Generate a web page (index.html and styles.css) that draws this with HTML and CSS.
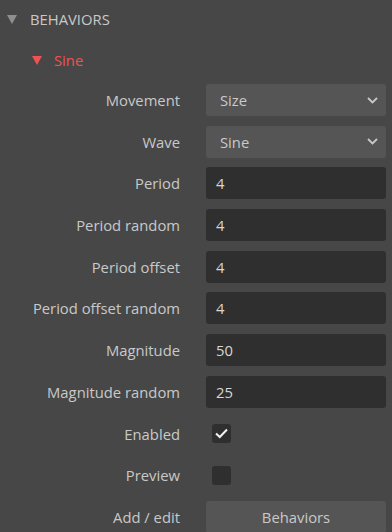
FILE: index.html
```html
<!DOCTYPE html>
<html lang="en">
<head>
  <meta charset="UTF-8">
  <title>Behaviors</title>
  <meta name="viewport" content="width=device-width, initial-scale=1.0">
  <link rel="stylesheet" href="styles.css">
</head>
<body>
  <div class="panel">
    <div class="section-head">
      <span class="tri tri-gray"></span>
      <span>BEHAVIORS</span>
    </div>

    <div class="behavior-head">
      <span class="tri tri-red"></span>
      <span>Sine</span>
    </div>

    <div class="rows">
      <div class="row">
        <label>Movement</label>
        <div class="select"><span>Size</span>
          <svg width="11" height="7" viewBox="0 0 11 7"><path d="M1 1 L5.5 5.5 L10 1" fill="none" stroke="#c8c8c8" stroke-width="1.8"/></svg>
        </div>
      </div>
      <div class="row">
        <label>Wave</label>
        <div class="select"><span>Sine</span>
          <svg width="11" height="7" viewBox="0 0 11 7"><path d="M1 1 L5.5 5.5 L10 1" fill="none" stroke="#c8c8c8" stroke-width="1.8"/></svg>
        </div>
      </div>
      <div class="row"><label>Period</label><div class="field">4</div></div>
      <div class="row"><label>Period random</label><div class="field">4</div></div>
      <div class="row"><label>Period offset</label><div class="field">4</div></div>
      <div class="row"><label>Period offset random</label><div class="field">4</div></div>
      <div class="row"><label>Magnitude</label><div class="field">50</div></div>
      <div class="row"><label>Magnitude random</label><div class="field">25</div></div>
      <div class="row">
        <label>Enabled</label>
        <div class="check">
          <svg width="19" height="19" viewBox="0 0 19 19"><path d="M4 9.5 L7.8 13 L15 5.5" fill="none" stroke="#f2f2f2" stroke-width="2"/></svg>
        </div>
      </div>
      <div class="row"><label>Preview</label><div class="check"></div></div>
      <div class="row"><label>Add / edit</label><div class="button">Behaviors</div></div>
    </div>
  </div>
</body>
</html>
```

FILE: styles.css
```css
body {
  margin: 0;
  background: #474747;
  font-family: "Open Sans", "Noto Sans", sans-serif;
  font-size: 14.8px;
  color: #c9c9c9;
}

.panel {
  width: 392px;
  height: 532px;
  overflow: hidden;
}

.section-head {
  display: flex;
  align-items: center;
  height: 20px;
  padding: 9px 0 0 7px;
}

.behavior-head {
  display: flex;
  align-items: center;
  height: 20px;
  padding: 21px 0 0 32px;
  color: #f05252;
}

.tri {
  width: 0;
  height: 0;
  border-left: 5.5px solid transparent;
  border-right: 5.5px solid transparent;
  margin-right: 13px;
  margin-top: 1px;
}

.tri-gray {
  border-top: 9px solid #8f8f8f;
}

.tri-red {
  border-top: 9px solid #f05252;
  margin-right: 12px;
}

.rows {
  display: flex;
  flex-direction: column;
  gap: 9.7px;
  padding-top: 14px;
}

.row {
  display: flex;
  align-items: center;
  height: 32px;
}

.row label {
  width: 180px;
  text-align: right;
  flex-shrink: 0;
}

.select, .field, .button {
  margin-left: 26px;
  width: 180px;
  height: 32px;
  box-sizing: border-box;
  border-radius: 3px;
  display: flex;
  align-items: center;
}

.select {
  background: #555555;
  justify-content: space-between;
  padding: 0 8px 0 14px;
}

.field {
  background: #2f2f2f;
  padding-left: 10px;
  color: #d6d6d6;
}

.button {
  background: #555555;
  justify-content: center;
}

.check {
  margin-left: 32px;
  width: 19px;
  height: 19px;
  border-radius: 3px;
  background: #2f2f2f;
}

.check svg {
  display: block;
}
```
